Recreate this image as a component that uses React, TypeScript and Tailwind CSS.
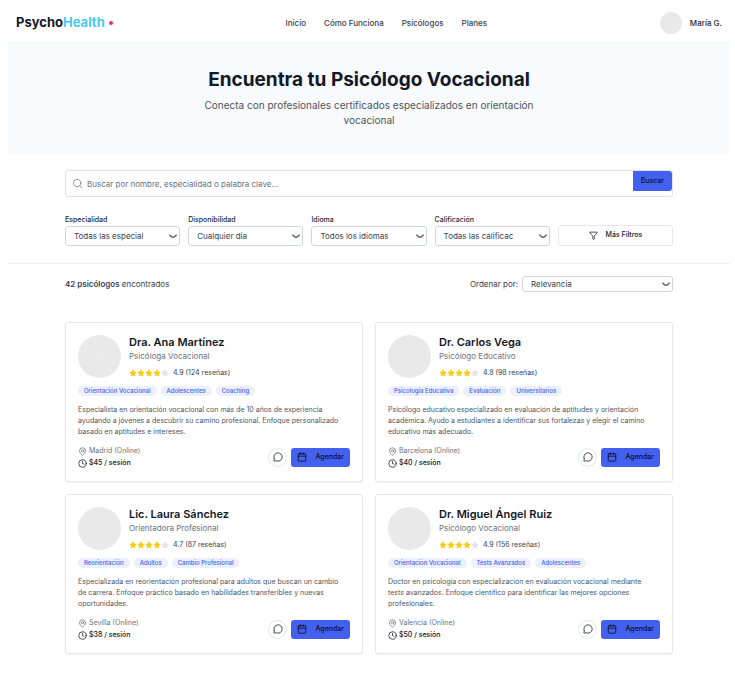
import React from "react";
import { Search, Funnel, MapPin, Clock, MessageCircle, Calendar } from "lucide-react";

type Psychologist = {
  name: string;
  role: string;
  rating: string;
  tags: string[];
  bio: string;
  place: string;
  price: string;
};

const psychologists: Psychologist[] = [
  {
    name: "Dra. Ana Martínez",
    role: "Psicóloga Vocacional",
    rating: "4.9 (124 reseñas)",
    tags: ["Orientación Vocacional", "Adolescentes", "Coaching"],
    bio: "Especialista en orientación vocacional con más de 10 años de experiencia ayudando a jóvenes a descubrir su camino profesional. Enfoque personalizado basado en aptitudes e intereses.",
    place: "Madrid (Online)",
    price: "$45 / sesión",
  },
  {
    name: "Dr. Carlos Vega",
    role: "Psicólogo Educativo",
    rating: "4.8 (98 reseñas)",
    tags: ["Psicología Educativa", "Evaluación", "Universitarios"],
    bio: "Psicólogo educativo especializado en evaluación de aptitudes y orientación académica. Ayudo a estudiantes a identificar sus fortalezas y elegir el camino educativo más adecuado.",
    place: "Barcelona (Online)",
    price: "$40 / sesión",
  },
  {
    name: "Lic. Laura Sánchez",
    role: "Orientadora Profesional",
    rating: "4.7 (87 reseñas)",
    tags: ["Reorientación", "Adultos", "Cambio Profesional"],
    bio: "Especializada en reorientación profesional para adultos que buscan un cambio de carrera. Enfoque práctico basado en habilidades transferibles y nuevas oportunidades.",
    place: "Sevilla (Online)",
    price: "$38 / sesión",
  },
  {
    name: "Dr. Miguel Ángel Ruiz",
    role: "Psicólogo Vocacional",
    rating: "4.9 (156 reseñas)",
    tags: ["Orientación Vocacional", "Tests Avanzados", "Adolescentes"],
    bio: "Doctor en psicología con especialización en evaluación vocacional mediante tests avanzados. Enfoque científico para identificar las mejores opciones profesionales.",
    place: "Valencia (Online)",
    price: "$50 / sesión",
  },
];

const filters = [
  { id: "especialidad", label: "Especialidad", value: "Todas las especial" },
  { id: "disponibilidad", label: "Disponibilidad", value: "Cualquier día" },
  { id: "idioma", label: "Idioma", value: "Todos los idiomas" },
  { id: "calificacion", label: "Calificación", value: "Todas las calificac" },
];

function Star({ filled }: { filled: boolean }) {
  return (
    <svg viewBox="0 0 20 20" className={filled ? "size-2 text-[#facc15]" : "size-2 text-[#dfe3f0]"} fill="currentColor" aria-hidden="true">
      <path d="M10 .2l3 6.2 6.8.9-5 4.7 1.3 6.8L10 15.5l-6.1 3.3 1.3-6.8-5-4.7 6.8-.9z" />
    </svg>
  );
}

function Select({ id, value, className }: { id: string; value: string; className: string }) {
  return (
    <div className="relative">
      <select
        id={id}
        className={`block w-full appearance-none rounded-[3px] border border-[#d1d5db] bg-white pl-2 pr-4 text-[8px] text-[#374151] ${className}`}
      >
        <option>{value}</option>
      </select>
      <svg viewBox="0 0 8 5" className="pointer-events-none absolute inset-y-0 right-[3px] my-auto h-[5px] w-2" fill="none" aria-hidden="true">
        <path d="M.8 1.2 2.6 2.8Q4 3.6 5.4 2.8L7.2 1.2" stroke="#6b7280" strokeWidth="1.6" strokeLinecap="round" />
      </svg>
    </div>
  );
}

function Card({ p }: { p: Psychologist }) {
  return (
    <article className="rounded-[3px] border border-[#e5e7eb] bg-white p-3 shadow-xs">
      <div className="flex gap-2">
        <div className="flex size-[43px] shrink-0 items-center justify-center rounded-full bg-[#e9e9e9]">
          <span className="size-2 rounded-full border border-[#eeeeee]" />
        </div>
        <div>
          <h2 className="text-[11px] leading-[14px] font-semibold text-[#111827]">{p.name}</h2>
          <p className="text-[8px] leading-[15px] text-[#6b7280]">{p.role}</p>
          <div className="flex items-center gap-1 pt-0.5">
            <div className="flex">
              {[0, 1, 2, 3, 4].map((i) => (
                <Star key={i} filled={i < 4} />
              ))}
            </div>
            <span className="text-[7px] leading-[14px] text-[#374151]">{p.rating}</span>
          </div>
        </div>
      </div>
      <ul className="mt-1.5 flex gap-1">
        {p.tags.map((t) => (
          <li key={t} className="rounded-full bg-[#eceffe] px-1.5 text-[6px] leading-[10px] font-medium text-[#4361ee]">
            {t}
          </li>
        ))}
      </ul>
      <p className="mt-2 pr-1.5 text-[7px] leading-[11px] text-[#4b5563]">{p.bio}</p>
      <div className="mt-2 flex items-center justify-between">
        <div>
          <p className="flex items-center gap-0.5 text-[7px] leading-[12px] text-[#6b7280]">
            <MapPin className="size-[9px]" aria-hidden="true" />
            {p.place}
          </p>
          <p className="flex items-center gap-0.5 text-[7px] leading-[12px] font-medium text-[#111827]">
            <Clock className="size-[9px]" aria-hidden="true" />
            {p.price}
          </p>
        </div>
        <div className="flex items-center gap-1">
          <button aria-label="Mensaje" className="flex size-[19px] items-center justify-center rounded-full border border-[#e5e7eb] text-[#1f2937]">
            <MessageCircle className="size-[10px]" aria-hidden="true" />
          </button>
          <button className="flex h-[19px] items-center gap-2 rounded-[3px] bg-[#4361ee] px-1.5 text-[7px] font-medium text-[#0b1020]">
            <Calendar className="size-[10px]" aria-hidden="true" />
            Agendar
          </button>
        </div>
      </div>
    </article>
  );
}

export default function App() {
  return (
    <div className="min-h-screen bg-white pr-[5px] pl-2 font-['Inter','Liberation_Sans',sans-serif]">
      <header className="flex h-[43px] items-center justify-between border-b border-[#f3f4f6] px-2 pt-1">
        <a href="#" className="flex items-center gap-1 text-[13px] font-bold text-[#111827]">
          <span>
            Psycho<span className="text-[#4cc9f0]">Health</span>
          </span>
          <span className="size-1 rounded-full bg-[#f72585]" />
        </a>
        <nav className="flex gap-[18px] text-[8px] font-medium text-[#374151]">
          <a href="#">Inicio</a>
          <a href="#">Cómo Funciona</a>
          <a href="#">Psicólogos</a>
          <a href="#">Planes</a>
        </nav>
        <div className="flex items-center gap-2 text-[8px] font-medium text-[#1f2937]">
          <span className="size-[22px] rounded-full bg-[#e9e9e9]" />
          María G.
        </div>
      </header>

      <section className="bg-[#f8fafc] pt-[25px] pb-[25px] text-center">
        <h1 className="text-[19px] leading-[24px] font-bold text-[#111827]">Encuentra tu Psicólogo Vocacional</h1>
        <p className="mx-auto mt-1.5 max-w-[360px] text-[10px] leading-[15px] text-[#4b5563]">
          Conecta con profesionales certificados especializados en orientación vocacional
        </p>
      </section>

      <section className="border-b border-[#eef0f3] pt-[17px] pb-[17px]">
        <div className="mx-auto max-w-[608px]">
          <form className="flex h-[27px] items-start rounded-[3px] border border-[#dfe2e8]" onSubmit={(e) => e.preventDefault()}>
            <label htmlFor="buscar" className="flex h-full flex-1 items-center gap-1 pl-1.5">
              <Search className="size-[11px] text-[#6b7280]" strokeWidth={1.5} aria-hidden="true" />
              <input
                id="buscar"
                aria-label="Buscar"
                placeholder="Buscar por nombre, especialidad o palabra clave..."
                className="flex-1 text-[8px] outline-none placeholder:text-[#6b7280]"
              />
            </label>
            <button className="h-[20px] rounded-r-[3px] bg-[#4361ee] px-2 text-[7px] font-medium text-[#0b1020]">Buscar</button>
          </form>
          <div className="mt-4 grid grid-cols-5 items-end gap-2">
            {filters.map((f) => (
              <div key={f.id}>
                <label htmlFor={f.id} className="block text-[7px] leading-[13px] font-medium text-[#1f2937]">
                  {f.label}
                </label>
                <Select id={f.id} value={f.value} className="h-[20px]" />
              </div>
            ))}
            <button className="flex h-[21px] items-center justify-center gap-2 rounded-[3px] border border-[#e5e7eb] text-[7px] font-medium text-[#0f172a]">
              <Funnel className="size-[9px]" aria-hidden="true" />
              Más Filtros
            </button>
          </div>
        </div>
      </section>

      <main className="mx-auto max-w-[608px] pt-3 pb-5">
        <div className="flex items-center justify-between text-[8px] text-[#374151]">
          <p>
            <strong className="font-semibold">42 psicólogos</strong> encontrados
          </p>
          <div className="flex items-center gap-1">
            <label htmlFor="orden">Ordenar por:</label>
            <div className="w-[151px]">
              <Select id="orden" value="Relevancia" className="h-[16px]" />
            </div>
          </div>
        </div>
        <div className="mt-[30px] grid grid-cols-2 gap-3">
          {psychologists.map((p) => (
            <Card key={p.name} p={p} />
          ))}
        </div>
      </main>
    </div>
  );
}
